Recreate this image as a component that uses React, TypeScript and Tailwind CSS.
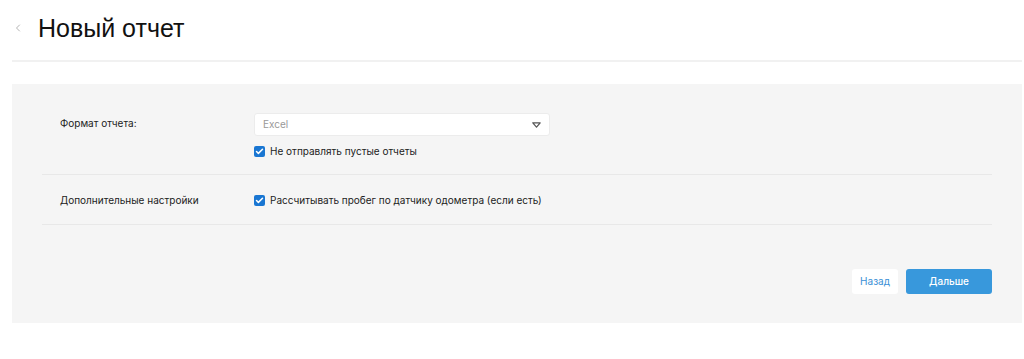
import { ChevronLeft, Check } from "lucide-react";

function Checkbox({ label }: { label: string }) {
  return (
    <label className="flex items-center gap-[5px]">
      <span className="flex h-[11px] w-[11px] items-center justify-center rounded-[2px] bg-[#1976d2]">
        <Check className="h-[9px] w-[9px] text-white" strokeWidth={4} />
      </span>
      <span className="text-[10px] text-[#222]">{label}</span>
    </label>
  );
}

export default function App() {
  return (
    <div className="min-h-[359px] bg-white font-['Inter',sans-serif]">
      <div className="pl-[12px] pr-[2px]">
        <div className="flex h-[62px] items-center border-b-2 border-[#f1f1f1] pb-[4px]">
          <ChevronLeft className="h-[12px] w-[12px] text-[#999]" strokeWidth={1.5} />
          <h1 className="ml-[14px] font-['Liberation_Sans',sans-serif] text-[25px] leading-none text-[#111]">
            Новый отчет
          </h1>
        </div>

        <div className="mt-[22px] bg-[#f5f5f5] px-[30px] pt-[29px] pb-[29px]">
          <div className="flex border-b border-[#e8e8e8] pb-[15px]">
            <div className="w-[212px] pl-[18px] pt-[3px] text-[10px] text-[#222]">Формат отчета:</div>
            <div className="flex flex-col gap-[8px]">
              <div className="flex h-[23px] w-[296px] items-center justify-between rounded-[3px] border border-[#ececec] bg-white px-[8px]">
                <span className="text-[10px] text-[#999]">Excel</span>
                <svg width="9" height="6" viewBox="0 0 9 6">
                  <path d="M0.8 0.8 H8.2 L4.5 5.2 Z" fill="none" stroke="#555" strokeWidth="1.2" strokeLinejoin="round" />
                </svg>
              </div>
              <Checkbox label="Не отправлять пустые отчеты" />
            </div>
          </div>

          <div className="flex items-center border-b border-[#e8e8e8] pt-[18px] pb-[16px]">
            <div className="w-[212px] pl-[18px] text-[10px] text-[#222]">Дополнительные настройки</div>
            <Checkbox label="Рассчитывать пробег по датчику одометра (если есть)" />
          </div>

          <div className="mt-[44px] flex justify-end gap-[8px]">
            <button className="h-[25px] rounded-[3px] bg-white px-[8px] text-[10px] text-[#3a8fd6]">Назад</button>
            <button className="h-[25px] w-[86px] rounded-[3px] bg-[#3898dc] text-[10px] font-medium text-white">Дальше</button>
          </div>
        </div>
      </div>
    </div>
  );
}
